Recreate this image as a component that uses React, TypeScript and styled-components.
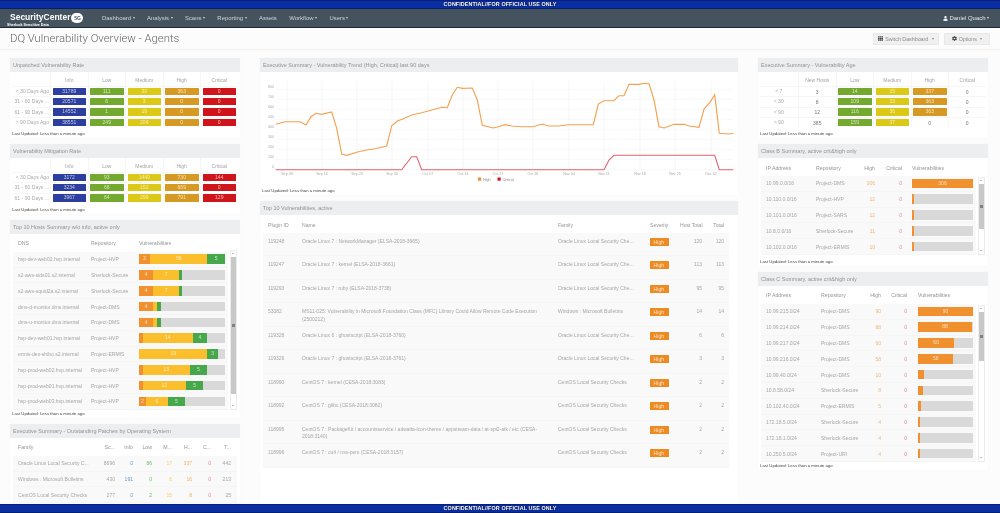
import React from "react";
import styled, { createGlobalStyle } from "styled-components";
import { FaCog, FaTh, FaUser } from "react-icons/fa";

const Global = createGlobalStyle`
  html, body { margin: 0; padding: 0; background: #fcfcfc; }
  body { font-family: "Liberation Sans", Arial, sans-serif; }
  * { box-sizing: border-box; }
`;

const Page = styled.div`
  width: 1000px; height: 513px; display: flex; flex-direction: column; overflow: hidden;
  background: #fcfcfc; filter: blur(0.38px);
`;
const Banner = styled.div`
  height: 9px; flex: none; background: #0a2ea2; border-top: 1px solid #06207c; border-bottom: 1px solid #06206e;
  color: #fff; font-size: 5.4px; font-weight: 700; line-height: 7px; text-align: center; letter-spacing: 0.1px;
  text-shadow: 0 0 1px #000;
`;
const Nav = styled.div`
  height: 19px; flex: none; display: flex; align-items: center; background: #45535f; border-bottom: 1px solid #1d2935;
  padding: 0 9px 0 7px; color: #cdd3d8; font-size: 5.95px;
`;
const Logo = styled.div`width: 95px; flex: none; position: relative; height: 18px;`;
const LogoName = styled.div`
  display: flex; align-items: center; gap: 1px; padding: 3px 0 0 3px; color: #fff; font-weight: 700; font-size: 8.5px; line-height: 11px;
`;
const LogoBadge = styled.span`
  width: 12px; height: 10px; border-radius: 5px; background: #fff; color: #45535f; font-size: 5px; line-height: 10px; text-align: center;
`;
const LogoSub = styled.div`
  position: absolute; left: 0; top: 14px; color: #fff; font-size: 3.7px; line-height: 4px; font-weight: 700; white-space: nowrap;
`;
const NavItems = styled.div`display: flex; align-items: center; gap: 12.4px; flex: 1;`;
const NavItem = styled.span`display: inline-flex; align-items: center; gap: 1.5px;`;
const Caret = styled.i`
  display: inline-block; width: 0; height: 0; border-left: 1.9px solid transparent; border-right: 1.9px solid transparent;
  border-top: 2.2px solid currentColor;
`;
const UserMenu = styled.span`display: inline-flex; align-items: center; gap: 1.5px; color: #e4e7ea; padding-right: 2px;`;

const TitleBar = styled.div`
  height: 22px; flex: none; display: flex; align-items: center; justify-content: space-between; padding: 0 10px;
  border-bottom: 1px solid #f0f0f0; background: #fcfcfc;
`;
const Title = styled.h1`
  margin: 0; font-family: Roboto, "Liberation Sans", sans-serif; font-weight: 300; font-size: 11.3px; color: #666;
`;
const Buttons = styled.div`display: flex; gap: 5px;`;
const Btn = styled.div<{ $w: number }>`
  width: ${(p) => p.$w}px; height: 12px; display: flex; align-items: center; justify-content: center; gap: 2px;
  background: #f0f0f0; border: 1px solid #e8e8e8; border-radius: 1px; color: #8a8a8a; font-size: 5.3px;
  svg { color: #444; }
`;

const Main = styled.div`
  flex: 1; min-height: 0; overflow: hidden; padding: 8px 12px 0 10px;
  display: grid; grid-template-columns: 230px 478px 230px; column-gap: 20px; align-items: start;
`;
const Column = styled.div`display: flex; flex-direction: column; gap: 6px;`;
const Panel = styled.section`background: #fff; box-shadow: 0 0 1px #f4f4f4;`;
const PanelHead = styled.div`
  height: 14px; background: #eceeef; color: #909396; font-size: 5.5px; line-height: 14px; padding-left: 3px; white-space: nowrap;
`;
const Updated = styled.div<{ $gap?: number }>`
  height: 8px; margin-top: ${(p) => p.$gap ?? 0}px; padding-left: 2px; color: #444; font-size: 4.3px; line-height: 8px;
`;

/* Heat tables */
const Heat = styled.div`
  margin: 0 1px 0 1.5px; display: grid; grid-template-columns: 38.5px repeat(5, 37.5px);
  grid-template-rows: 14px; grid-auto-rows: 10.25px;
`;
const HeatHead = styled.div`
  border-left: 1px solid #f6f6f6; color: #a3a3a3; font-size: 5px; text-align: center; line-height: 16px;
  &:first-child { border-left: 0; }
`;
const HeatLabel = styled.div`
  border-top: 1px solid #f6f6f6; color: #aaa; font-size: 5.1px; line-height: 9px; text-align: right; padding-right: 1px; white-space: nowrap; overflow: hidden;
`;
const HeatCell = styled.div`
  border-top: 1px solid #f6f6f6; border-left: 1px solid #f6f6f6; padding: 0.8px 1.5px; color: #777; font-size: 5px; line-height: 8px; text-align: center;
`;
const HeatBox = styled.div<{ $c: string }>`
  height: 7.4px; background: ${(p) => p.$c}; color: rgba(255,255,255,.7); font-size: 5px; line-height: 7.4px; text-align: center; border-radius: 0.5px;
`;

/* Scrolling tables */
const Scroller = styled.div<{ $x: number }>`display: flex; align-items: stretch; margin-left: ${(p) => p.$x}px;`;
const HeaderRow = styled.div<{ $cols: string }>`
  height: 18px; display: grid; grid-template-columns: ${(p) => p.$cols}; align-items: center; color: #949494; font-size: 5.2px; padding-top: 1px;
`;
const Row = styled.div<{ $cols: string; $h: number }>`
  height: ${(p) => p.$h}px; display: grid; grid-template-columns: ${(p) => p.$cols}; align-items: center;
  background: #f9f9f9; border-bottom: 1px solid #f5f5f5; color: #a6a6a6; font-size: 5.05px;
`;
const First = styled.div`padding-left: 5px; white-space: nowrap; overflow: hidden; text-overflow: ellipsis;`;
const Plain = styled.div`white-space: nowrap; overflow: hidden; text-overflow: ellipsis;`;
const Num = styled.div<{ $c?: string }>`text-align: right; color: ${(p) => p.$c ?? "inherit"}; white-space: nowrap;`;
const Track = styled.div<{ $ml?: number; $mr?: number; $h?: number }>`
  margin-left: ${(p) => p.$ml ?? 0}px; margin-right: ${(p) => p.$mr ?? 3}px; height: ${(p) => p.$h ?? 9.6}px; background: #d9d9d9; display: flex;
`;
const Seg = styled.div<{ $c: string }>`
  height: 100%; background: ${(p) => p.$c}; color: rgba(255,255,255,.7); font-size: 5px; line-height: 9.6px; text-align: center; overflow: hidden;
`;
const Bar = styled.div<{ $top: number }>`
  width: 7px; flex: none; margin: ${(p) => p.$top}px 0 0 2px; background: #fff; border: 1px solid #ececec; display: flex; flex-direction: column; align-items: stretch;
`;
const Arrow = styled.div<{ $down?: boolean }>`
  height: 6px; flex: none; position: relative; margin-top: ${(p) => (p.$down ? "auto" : "0")};
  &::after { content: ""; position: absolute; left: 1.2px; top: 2px; border-left: 1.3px solid transparent; border-right: 1.3px solid transparent;
    ${(p) => (p.$down ? "border-top: 1.6px solid #777;" : "border-bottom: 1.6px solid #777;")} }
`;
const Thumb = styled.div<{ $h: number }>`
  height: ${(p) => p.$h}px; background: #c8c8c8; display: flex; align-items: center; justify-content: center;
  &::after { content: ""; width: 2.5px; height: 2.5px; background: #808080; }
`;

/* Center table */
const Badge = styled.span`
  display: inline-block; width: 18.5px; height: 8px; background: #ee8a22; color: rgba(255,255,255,.75); font-size: 5.2px; line-height: 8px; padding-left: 3.5px; border-radius: 0.5px;
`;
const VulnRow = styled.div`
  height: 23.47px; display: grid; grid-template-columns: 39px 256px 92px 30px 22px 22px; padding-top: 5px; line-height: 7.5px;
  background: #f9f9f9; border-bottom: 1px solid #f5f5f5; color: #a6a6a6; font-size: 5px;
`;
const VulnHead = styled.div`
  height: 18px; display: grid; grid-template-columns: 39px 256px 92px 30px 22px 22px; align-items: center; color: #949494; font-size: 5.1px; padding-top: 1px;
`;
const VulnTable = styled.div`margin: 0 9px 0 3px; padding-bottom: 60px;`;
const NameCell = styled.div`padding-right: 12px;`;
const ChartSvg = styled.svg`display: block; width: 478px; height: 115px;`;

const C = { info: "#2d3f9e", low: "#74a92f", med: "#dcc917", high: "#d69a24", crit: "#d0141c", o: "#f0902f", y: "#fbbf2e", g: "#46a84a" };

const heatA = [
  ["< 30 Days Ago", "31789", "111", "39", "363", "0"],
  ["31 - 60 Days ...", "20571", "6", "3", "0", "0"],
  ["61 - 90 Days ...", "14552", "1", "19", "0", "0"],
  ["> 90 Days Ago", "38551", "249", "206", "0", "0"],
];
const heatB = [
  ["< 30 Days Ago", "3172", "93", "1449", "730", "144"],
  ["31 - 60 Days ...", "3234", "68", "152", "669", "0"],
  ["61 - 90 Days ...", "3967", "64", "299", "791", "129"],
];
const cols5 = [C.info, C.low, C.med, C.high, C.crit];
const ageRows = [
  ["< 7", "3", "14", "15", "337", "0"],
  ["< 30", "8", "109", "33", "363", "0"],
  ["< 90", "12", "116", "36", "363", "0"],
  ["> 90", "385", "159", "37", "0", "0"],
];

const HeatTable = ({ rows }: { rows: string[][] }) => (
  <Heat>
    {["", "Info", "Low", "Medium", "High", "Critical"].map((h, i) => <HeatHead key={i}>{h}</HeatHead>)}
    {rows.map((r) => (
      <React.Fragment key={r[0]}>
        <HeatLabel>{r[0]}</HeatLabel>
        {r.slice(1).map((v, i) => <HeatCell key={i}><HeatBox $c={cols5[i]}>{v}</HeatBox></HeatCell>)}
      </React.Fragment>
    ))}
  </Heat>
);

const CenteredLabel = styled(HeatLabel)`text-align: center; padding-right: 0;`;

const AgeTable = () => (
  <Heat>
    {["", "New Hosts", "Low", "Medium", "High", "Critical"].map((h, i) => <HeatHead key={i}>{h}</HeatHead>)}
    {ageRows.map((r, ri) => (
      <React.Fragment key={r[0]}>
        <CenteredLabel>{r[0]}</CenteredLabel>
        <HeatCell>{r[1]}</HeatCell>
        <HeatCell><HeatBox $c={C.low}>{r[2]}</HeatBox></HeatCell>
        <HeatCell><HeatBox $c={C.med}>{r[3]}</HeatBox></HeatCell>
        <HeatCell>{ri < 3 ? <HeatBox $c={C.high}>{r[4]}</HeatBox> : r[4]}</HeatCell>
        <HeatCell>{r[5]}</HeatCell>
      </React.Fragment>
    ))}
  </Heat>
);

const Scroll = ({ top, thumb }: { top: number; thumb: number }) => (
  <Bar $top={top}><Arrow /><Thumb $h={thumb} /><Arrow $down /></Bar>
);

type S = [number, string, string?];
const hosts: [string, string, S[]][] = [
  ["hvp-dev-web02.hvp.internal", "Project-HVP", [[12.8, C.o, "3"], [66.7, C.y, "56"], [20.5, C.g, "5"]]],
  ["s2-aws-sids01.s2.internal", "Sherlock-Secure", [[16.7, C.o, "4"], [29.5, C.y, "7"], [4.3, C.g]]],
  ["s2-aws-squid2a.s2.internal", "Sherlock-Secure", [[16.7, C.o, "4"], [29.5, C.y, "7"], [4.3, C.g]]],
  ["dms-d-monitor.dms.internal", "Project-DMS", [[16.7, C.o, "4"], [4.7, C.y], [3.9, C.g]]],
  ["dms-u-monitor.dms.internal", "Project-DMS", [[16.7, C.o, "4"], [4.7, C.y], [3.9, C.g]]],
  ["hvp-dev-web01.hvp.internal", "Project-HVP", [[4.3, C.o], [58.5, C.y, "14"], [16.3, C.g, "4"]]],
  ["ermis-dev-shibo.s2.internal", "Project-ERMIS", [[79.5, C.y, "19"], [12, C.g, "3"]]],
  ["hvp-prod-web02.hvp.internal", "Project-HVP", [[4.3, C.o], [54.7, C.y, "13"], [20.2, C.g, "5"]]],
  ["hvp-prod-web01.hvp.internal", "Project-HVP", [[4.3, C.o], [50.4, C.y, "12"], [20.2, C.g, "5"]]],
  ["hvp-prod-web03.hvp.internal", "Project-HVP", [[8.1, C.o, "2"], [25.2, C.y, "6"], [20.5, C.g, "5"]]],
];
const Segs = ({ s }: { s: S[] }) => (
  <>{s.map((x, i) => <Seg key={i} $c={x[1]} style={{ width: `${x[0]}%` }}>{x[2]}</Seg>)}</>
);

const hostCols = "78px 48px 89px";
const patchCols = "87px 15px 18px 19px 20px 20px 19px 20px";
const patchColors = [undefined, "#5b9bd5", "#6cbf6c", "#f3cf63", "#f0b060", "#e58a8a", undefined];
const patches = [
  ["Oracle Linux Local Security C...", "8696", "0", "86", "17", "337", "0", "442"],
  ["Windows : Microsoft Bulletins", "430", "191", "0", "6", "16", "0", "213"],
  ["CentOS Local Security Checks", "277", "0", "2", "15", "8", "0", "25"],
];

const bCols = "55px 46px 13px 27px 74px";
const cCols = "60px 47px 13px 26px 69px";
const classB: [string, string, string, number][] = [
  ["10.99.0.0/16", "Project-DMS", "306", 100],
  ["10.110.0.0/16", "Project-HVP", "12", 4],
  ["10.101.0.0/16", "Project-SARS", "12", 4],
  ["10.8.0.0/16", "Sherlock-Secure", "11", 3.6],
  ["10.102.0.0/16", "Project-ERMIS", "10", 3.3],
];
const classC: [string, string, string, number][] = [
  ["10.99.215.0/24", "Project-DMS", "90", 100],
  ["10.99.214.0/24", "Project-DMS", "88", 98],
  ["10.99.217.0/24", "Project-DMS", "60", 66],
  ["10.99.216.0/24", "Project-DMS", "58", 64.5],
  ["10.99.40.0/24", "Project-DMS", "10", 11],
  ["10.8.58.0/24", "Sherlock-Secure", "8", 8.5],
  ["10.102.40.0/24", "Project-ERMIS", "5", 5.5],
  ["172.18.5.0/24", "Sherlock-Secure", "4", 4.4],
  ["172.18.1.0/24", "Sherlock-Secure", "4", 4.4],
  ["10.250.5.0/24", "Project-URI", "4", 4.4],
];

const vulns = [
  ["119248", "Oracle Linux 7 : NetworkManager (ELSA-2018-3665)", "Oracle Linux Local Security Che...", "120", "120"],
  ["119247", "Oracle Linux 7 : kernel (ELSA-2018-3661)", "Oracle Linux Local Security Che...", "113", "113"],
  ["119293", "Oracle Linux 7 : ruby (ELSA-2018-3738)", "Oracle Linux Local Security Che...", "95", "95"],
  ["53382", "MS11-025: Vulnerability in Microsoft Foundation Class (MFC) Library Could Allow Remote Code Execution (2500212)", "Windows : Microsoft Bulletins", "14", "14"],
  ["119328", "Oracle Linux 6 : ghostscript (ELSA-2018-3760)", "Oracle Linux Local Security Che...", "6", "6"],
  ["119329", "Oracle Linux 7 : ghostscript (ELSA-2018-3761)", "Oracle Linux Local Security Che...", "3", "3"],
  ["118990", "CentOS 7 : kernel (CESA-2018:3083)", "CentOS Local Security Checks", "2", "2"],
  ["118992", "CentOS 7 : glibc (CESA-2018:3082)", "CentOS Local Security Checks", "2", "2"],
  ["118995", "CentOS 7 : PackageKit / accountsservice / adwaita-icon-theme / appstream-data / at-spi2-atk / etc (CESA-2018:3140)", "CentOS Local Security Checks", "2", "2"],
  ["118996", "CentOS 7 : curl / nss-pem (CESA-2018:3157)", "CentOS Local Security Checks", "2", "2"],
];

const z6 = (a: number[][]) => a.map(([x, y]) => `${(255 + x / 3).toFixed(1)},${(55 + y / 3).toFixed(1)}`);
const z7 = (a: number[][]) => a.map(([x, y]) => `${(505 + x / 3).toFixed(1)},${(55 + y / 3).toFixed(1)}`);
const highPts = [
  ...z6([[62,208],[90,200],[135,200],[153,210],[168,185],[183,175],[200,178],[230,171],[245,220],[260,297],[275,301],[305,292],[330,286],[360,281],[395,273],[410,212],[428,197],[442,193],[470,180],[500,173],[530,165],[560,157],[577,158],[592,120],[607,97],[622,100],[652,99],[667,135],[682,211],[715,219],[735,214]]),
  ...z7([[0,209],[20,213],[50,215],[85,215],[100,210],[115,208],[130,213],[160,213],[190,209],[230,209],[265,209],[280,147],[297,137],[327,137],[342,122],[357,122],[372,88],[402,88],[417,85],[432,86],[447,135],[462,215],[478,219],[507,208],[537,208],[552,213],[582,217],[597,162],[615,142],[629,119],[643,235],[672,237],[685,235]]),
].join(" ");
const critPts = [
  ...z6([[62,344],[440,344],[470,305],[485,305],[500,344]]),
  ...z7([[297,344],[312,315],[327,301],[629,301],[643,344],[685,344]]),
].join(" ");
const xTicks: [number, string][] = [[287,"Sep 09"],[322,"Sep 16"],[357,"Sep 23"],[392,"Sep 30"],[428,"Oct 07"],[463,"Oct 14"],[498,"Oct 21"],[533,"Oct 28"],[569,"Nov 04"],[604,"Nov 11"],[640,"Nov 18"],[675,"Nov 25"],[711,"Dec 02"]];
const yTicks = [800,700,600,500,400,300,200,100,0];

const Chart = () => (
  <ChartSvg viewBox="260 72 478 115">
    {yTicks.map((v, i) => (
      <g key={v}>
        <line x1={276} x2={733} y1={89.3 + i * 10} y2={89.3 + i * 10} stroke="#f2f2f2" strokeWidth={0.6} />
        <text x={274} y={88 + i * 10} fontSize={3.6} fill="#aaa" textAnchor="end" fontFamily="Liberation Sans">{v}</text>
      </g>
    ))}
    {xTicks.map(([x, t]) => (
      <g key={t}>
        <line x1={x} x2={x} y1={81} y2={170} stroke="#f0f0f0" strokeWidth={0.6} />
        <text x={x} y={174.5} fontSize={3.7} fill="#aaa" textAnchor="middle" fontFamily="Liberation Sans">{t}</text>
      </g>
    ))}
    <polyline points={highPts} fill="none" stroke="#f3a14f" strokeWidth={1.15} />
    <polyline points={critPts} fill="none" stroke="#e0606c" strokeWidth={1.05} />
    <rect x={478} y={177.5} width={3.2} height={3.2} fill="#f0902f" />
    <text x={483} y={180.5} fontSize={3.7} fill="#888" fontFamily="Liberation Sans">High</text>
    <rect x={497.5} y={177.5} width={3.2} height={3.2} fill="#d0141c" />
    <text x={502.5} y={180.5} fontSize={3.7} fill="#888" fontFamily="Liberation Sans">Critical</text>
  </ChartSvg>
);

const InsetHeader = styled(HeaderRow)`margin-left: 3px;`;
const VulnLabel = styled(Plain)<{ $pad: number }>`padding-left: ${(p) => p.$pad}px;`;
const PatchRows = styled.div`margin: 0 3px;`;

const ClassTable = ({ cols, rows, thumb, pad }: { cols: string; rows: [string, string, string, number][]; thumb: number; pad: number }) => (
  <>
    <InsetHeader $cols={cols}>
      <First>IP Address</First><Plain>Repository</Plain><Num>High</Num><Num>Critical</Num><VulnLabel $pad={pad}>Vulnerabilities</VulnLabel>
    </InsetHeader>
    <Scroller $x={3}>
      <div>
        {rows.map((r) => (
          <Row key={r[0]} $cols={cols} $h={15.8}>
            <First>{r[0]}</First><Plain>{r[1]}</Plain><Num $c="#eeb877">{r[2]}</Num><Num $c="#e58a8a">0</Num>
            <Track $ml={pad}><Seg $c={C.o} style={{ width: `${r[3]}%` }}>{r[3] > 50 ? r[2] : ""}</Seg></Track>
          </Row>
        ))}
      </div>
      <Scroll top={1} thumb={thumb} />
    </Scroller>
  </>
);

export default function App() {
  return (
    <Page>
      <Global />
      <Banner>CONFIDENTIAL//FOR OFFICIAL USE ONLY</Banner>
      <Nav>
        <Logo>
          <LogoName>SecurityCenter<LogoBadge>5G</LogoBadge></LogoName>
          <LogoSub>Sherlock Sensitive Data</LogoSub>
        </Logo>
        <NavItems>
          {["Dashboard", "Analysis", "Scans", "Reporting"].map((t) => <NavItem key={t}>{t}<Caret /></NavItem>)}
          <NavItem>Assets</NavItem>
          {["Workflow", "Users"].map((t) => <NavItem key={t}>{t}<Caret /></NavItem>)}
        </NavItems>
        <UserMenu><FaUser size={5} />Daniel Quach<Caret /></UserMenu>
      </Nav>
      <TitleBar>
        <Title>DQ Vulnerability Overview - Agents</Title>
        <Buttons>
          <Btn $w={66}><FaTh size={5} />Switch Dashboard&nbsp;<Caret /></Btn>
          <Btn $w={46}><FaCog size={5} />Options&nbsp;<Caret /></Btn>
        </Buttons>
      </TitleBar>
      <Main>
        <Column>
          <Panel>
            <PanelHead>Unpatched Vulnerability Rate</PanelHead>
            <HeatTable rows={heatA} />
            <Updated $gap={3}>Last Updated: Less than a minute ago</Updated>
          </Panel>
          <Panel>
            <PanelHead>Vulnerability Mitigation Rate</PanelHead>
            <HeatTable rows={heatB} />
            <Updated $gap={3}>Last Updated: Less than a minute ago</Updated>
          </Panel>
          <Panel>
            <PanelHead>Top 10 Hosts Summary w/o info, active only</PanelHead>
            <InsetHeader $cols={hostCols}>
              <First>DNS</First><Plain>Repository</Plain><Plain>Vulnerabilities</Plain>
            </InsetHeader>
            <Scroller $x={3}>
              <div>
                {hosts.map((h) => (
                  <Row key={h[0]} $cols={hostCols} $h={15.8}>
                    <First>{h[0]}</First><Plain>{h[1]}</Plain>
                    <Track><Segs s={h[2]} /></Track>
                  </Row>
                ))}
              </div>
              <Scroll top={-2} thumb={137} />
            </Scroller>
            <Updated>Last Updated: Less than a minute ago</Updated>
          </Panel>
          <Panel>
            <PanelHead>Executive Summary - Outstanding Patches by Operating System</PanelHead>
            <InsetHeader $cols={patchCols}>
              <First>Family</First><Num>Sc...</Num><Num>Info</Num><Num>Low</Num><Num>M...</Num><Num>H...</Num><Num>C...</Num><Num>T...</Num>
            </InsetHeader>
            <PatchRows>
              {patches.map((p) => (
                <Row key={p[0]} $cols={patchCols} $h={15.8}>
                  <First>{p[0]}</First>
                  {p.slice(1).map((v, i) => <Num key={i} $c={patchColors[i]}>{v}</Num>)}
                </Row>
              ))}
            </PatchRows>
          </Panel>
        </Column>
        <Column>
          <Panel>
            <PanelHead>Executive Summary - Vulnerability Trend (High, Critical) last 90 days</PanelHead>
            <Chart />
            <Updated>Last Updated: Less than a minute ago</Updated>
          </Panel>
          <Panel>
            <PanelHead>Top 10 Vulnerabilities, active</PanelHead>
            <VulnTable>
              <VulnHead>
                <First>Plugin ID</First><Plain>Name</Plain><Plain>Family</Plain><Plain>Severity</Plain><Num>Host Total</Num><Num>Total</Num>
              </VulnHead>
              {vulns.map((v) => (
                <VulnRow key={v[0] + v[1]}>
                  <First>{v[0]}</First><NameCell>{v[1]}</NameCell><Plain>{v[2]}</Plain>
                  <div><Badge>High</Badge></div><Num>{v[3]}</Num><Num>{v[4]}</Num>
                </VulnRow>
              ))}
            </VulnTable>
          </Panel>
        </Column>
        <Column>
          <Panel>
            <PanelHead>Executive Summary - Vulnerability Age</PanelHead>
            <AgeTable />
            <Updated $gap={3}>Last Updated: Less than a minute ago</Updated>
          </Panel>
          <Panel>
            <PanelHead>Class B Summary, active crit&amp;high only</PanelHead>
            <ClassTable cols={bCols} rows={classB} thumb={45} pad={10} />
            <Updated $gap={3}>Last Updated: Less than a minute ago</Updated>
          </Panel>
          <Panel>
            <PanelHead>Class C Summary, active crit&amp;high only</PanelHead>
            <ClassTable cols={cCols} rows={classC} thumb={49} pad={11} />
            <Updated>Last Updated: Less than a minute ago</Updated>
          </Panel>
        </Column>
      </Main>
      <Banner>CONFIDENTIAL//FOR OFFICIAL USE ONLY</Banner>
    </Page>
  );
}
